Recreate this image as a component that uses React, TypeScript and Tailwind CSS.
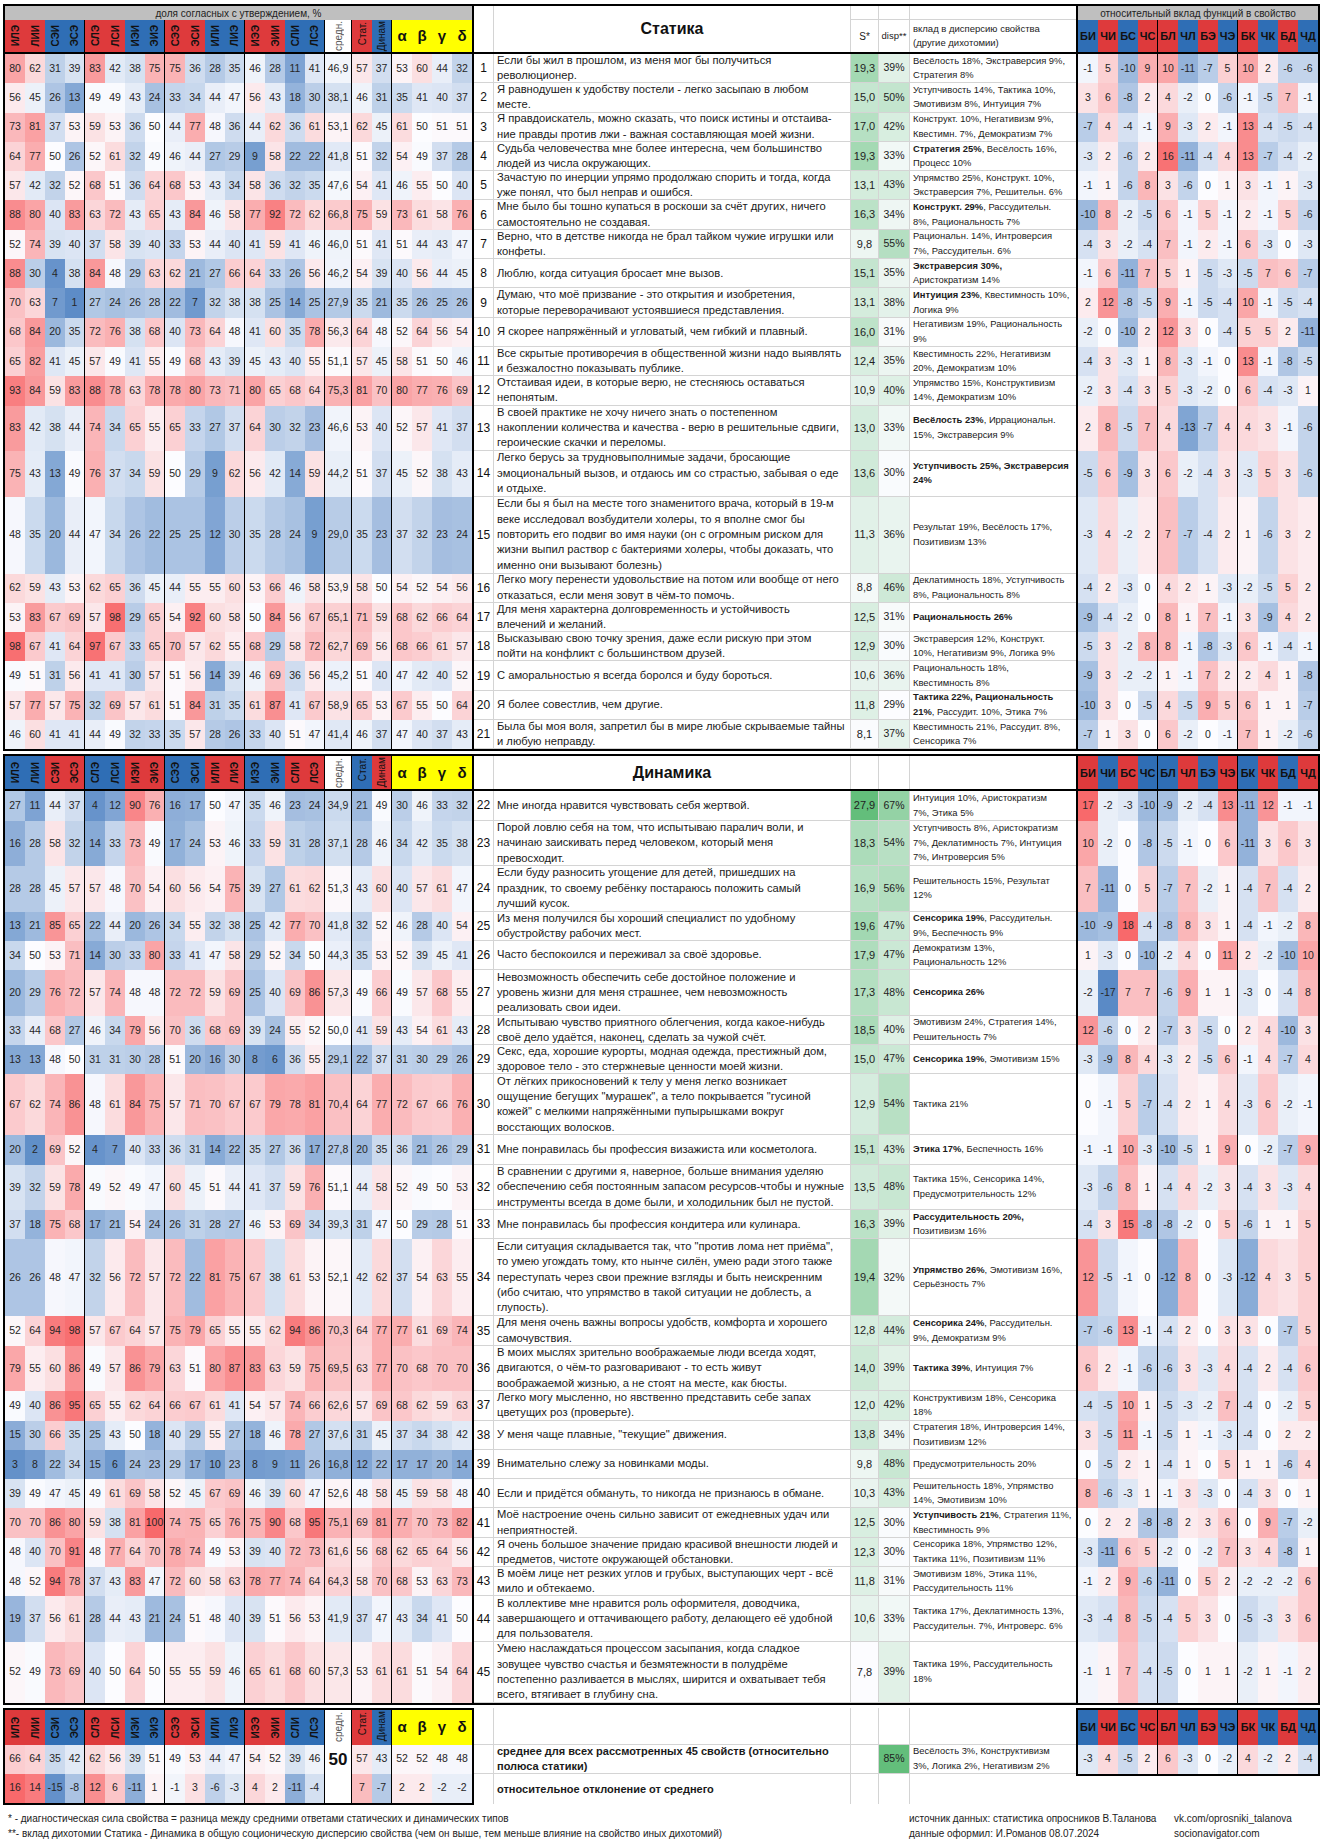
import React from "react";

const RED = "#de3a3c";
const BLUE = "#2f6eb5";

const TYPES = ["ИЛЭ", "ЛИИ", "СЭИ", "ЭСЭ", "СЛЭ", "ЛСИ", "ИЭИ", "ЭИЭ", "СЭЭ", "ЭСИ", "ИЛИ", "ЛИЭ", "ИЭЭ", "ЭИИ", "СЛИ", "ЛСЭ"];
const FUNCS = ["БИ", "ЧИ", "БС", "ЧС", "БЛ", "ЧЛ", "БЭ", "ЧЭ", "БК", "ЧК", "БД", "ЧД"];
// 1 = static (red in the Статика header)
const T_STAT = [1, 1, 0, 0, 1, 1, 0, 0, 1, 1, 0, 0, 1, 1, 0, 0];
const F_STAT = [0, 1, 0, 1, 1, 0, 1, 0, 1, 0, 1, 0];
const GREEK = ["α", "β", "γ", "δ"];

type Raw = [number, string, string, string, string, string[], string, string, string[], string];

const RAW: Raw[] = [
  [1, "80 62 31 39 83 42 38 75 75 36 28 35 46 28 11 41", "46,9", "57 37", "53 60 44 32", ["Если бы жил в прошлом, из меня мог бы получиться", "революционер."], "19,3", "39%", ["Весёлость 18%, Экстраверсия 9%,", "Стратегия 8%"], "-1 5 -10 9 10 -11 -7 5 10 2 -6 -6"],
  [2, "56 45 26 13 49 49 43 24 33 34 44 47 56 43 18 30", "38,1", "46 31", "35 41 40 37", ["Я равнодушен к удобству постели - легко засыпаю в любом", "месте."], "15,0", "50%", ["Уступчивость 14%, Тактика 10%,", "Эмотивизм 8%, Интуиция 7%"], "3 6 -8 2 4 -2 0 -6 -1 -5 7 -1"],
  [3, "73 81 37 53 59 53 36 50 44 77 48 36 44 62 36 61", "53,1", "62 45", "61 50 51 51", ["Я правдоискатель, можно сказать, что поиск истины и отстаива-", "ние правды против лжи - важная составляющая моей жизни."], "17,0", "42%", ["Конструкт. 10%, Негативизм 9%,", "Квестимн. 7%, Демократизм 7%"], "-7 4 -4 -1 9 -3 2 -1 13 -4 -5 -4"],
  [4, "64 77 50 26 52 61 32 49 46 44 27 29 9 58 22 22", "41,8", "51 32", "54 49 37 28", ["Судьба человечества мне более интересна, чем большинство", "людей из числа окружающих."], "19,3", "33%", ["*Стратегия 25%*, Весёлость 16%,", "Процесс 10%"], "-3 2 -6 2 16 -11 -4 4 13 -7 -4 -2"],
  [5, "57 42 32 52 68 51 36 64 68 53 43 34 58 36 32 35", "47,6", "54 41", "46 55 50 40", ["Зачастую по инерции упрямо продолжаю спорить и тогда, когда", "уже понял, что был неправ и ошибся."], "13,1", "43%", ["Упрямство 25%, Конструкт. 10%,", "Экстраверсия 7%, Решительн. 6%"], "-1 1 -6 8 3 -6 0 1 3 -1 1 -3"],
  [6, "88 80 40 83 63 72 43 65 43 84 46 58 77 92 72 62", "66,8", "75 59", "73 61 58 76", ["Мне было бы тошно купаться в роскоши за счёт других, ничего", "самостоятельно не создавая."], "16,3", "34%", ["*Конструкт. 29%*, Рассудительн.", "8%, Рациональность 7%"], "-10 8 -2 -5 6 -1 5 -1 2 -1 5 -6"],
  [7, "52 74 39 40 37 58 39 40 33 53 44 40 41 59 41 46", "46,0", "51 41", "51 44 43 47", ["Верно, что в детстве никогда не брал тайком чужие игрушки или", "конфеты."], "9,8", "55%", ["Рациональн. 14%, Интроверсия", "7%, Рассудительн. 6%"], "-4 3 -2 -4 7 -1 2 -1 6 -3 0 -3"],
  [8, "88 30 4 38 84 48 29 63 62 21 27 66 64 33 26 56", "46,2", "54 39", "40 56 44 45", ["Люблю, когда ситуация бросает мне вызов."], "15,1", "35%", ["*Экстраверсия 30%,*", "Аристократизм 14%"], "-1 6 -11 7 5 1 -5 -3 -5 7 6 -7"],
  [9, "70 63 7 1 27 24 26 28 22 7 32 38 38 25 14 25", "27,9", "35 21", "35 26 25 26", ["Думаю, что моё призвание - это открытия и изобретения,", "которые переворачивают устоявшиеся представления."], "13,1", "38%", ["*Интуиция 23%*, Квестимность 10%,", "Логика 9%"], "2 12 -8 -5 9 -1 -5 -4 10 -1 -5 -4"],
  [10, "68 84 20 35 72 76 38 68 40 73 64 48 41 60 35 78", "56,3", "64 48", "52 64 56 54", ["Я скорее напряжённый и угловатый, чем гибкий и плавный."], "16,0", "31%", ["Негативизм 19%, Рациональность", "9%"], "-2 0 -10 2 12 3 0 -4 5 5 2 -11"],
  [11, "65 82 41 45 57 49 41 55 49 68 43 39 45 43 40 55", "51,1", "57 45", "58 51 50 46", ["Все скрытые противоречия в общественной жизни надо выявлять", "и безжалостно показывать публике."], "12,4", "35%", ["Квестимность 22%, Негативизм", "20%, Демократизм 10%"], "-4 3 -3 1 8 -3 -1 0 13 -1 -8 -5"],
  [12, "93 84 59 83 88 78 63 78 78 80 73 71 80 65 68 64", "75,3", "81 70", "80 77 76 69", ["Отстаивая идеи, в которые верю, не стесняюсь оставаться", "непонятым."], "10,9", "40%", ["Упрямство 15%, Конструктивизм", "14%, Демократизм 10%"], "-2 3 -4 3 5 -3 -2 0 6 -4 -3 1"],
  [13, "83 42 38 44 74 34 65 55 65 33 27 37 64 30 32 23", "46,6", "53 40", "52 57 41 37", ["В своей практике не хочу ничего знать о постепенном", "накоплении количества и качества - верю в решительные сдвиги,", "героические скачки и переломы."], "13,0", "33%", ["*Весёлость 23%*, Иррациональн.", "15%, Экстраверсия 9%"], "2 8 -5 7 4 -13 -7 4 4 3 -1 -6"],
  [14, "75 43 13 49 76 37 34 59 50 29 9 62 56 42 14 59", "44,2", "51 37", "45 52 38 43", ["Легко берусь за трудновыполнимые задачи, бросающие", "эмоциональный вызов, и отдаюсь им со страстью, забывая о еде", "и отдыхе."], "13,6", "30%", ["*Уступчивость 25%, Экстраверсия*", "*24%*"], "-5 6 -9 3 6 -2 -4 3 -3 5 3 -6"],
  [15, "48 35 20 44 47 34 26 22 25 25 12 30 35 28 24 9", "29,0", "35 23", "37 32 23 24", ["Если бы я был на месте того знаменитого врача, который в 19-м", "веке исследовал возбудители холеры, то я вполне смог бы", "повторить его подвиг во имя науки (он с огромным риском для", "жизни выпил раствор с бактериями холеры, чтобы доказать, что", "именно они вызывают болезнь)"], "11,3", "36%", ["Результат 19%, Весёлость 17%,", "Позитивизм 13%"], "-3 4 -2 2 7 -7 -4 2 1 -6 3 2"],
  [16, "62 59 43 53 62 65 36 45 44 55 55 60 53 66 46 58", "53,9", "58 50", "54 52 54 56", ["Легко могу перенести удовольствие на потом или вообще от него", "отказаться, если меня зовут в чём-то помочь."], "8,8", "46%", ["Деклатимность 18%, Уступчивость", "8%, Рациональность 8%"], "-4 2 -3 0 4 2 1 -3 -2 -5 5 2"],
  [17, "53 83 67 69 57 98 29 65 54 92 60 58 50 84 56 67", "65,1", "71 59", "68 62 66 64", ["Для меня характерна долговременность и устойчивость", "влечений и желаний."], "12,5", "31%", ["*Рациональность 26%*"], "-9 -4 -2 0 8 1 7 -1 3 -9 4 2"],
  [18, "98 67 41 64 97 67 33 65 70 57 62 55 68 29 58 72", "62,7", "69 56", "68 66 61 57", ["Высказываю свою точку зрения, даже если рискую при этом", "пойти на конфликт с большинством друзей."], "12,9", "30%", ["Экстраверсия 12%, Конструкт.", "10%, Негативизм 9%, Логика 9%"], "-5 3 -2 8 8 -1 -8 -3 6 -1 -4 -1"],
  [19, "49 51 31 56 41 41 30 57 51 56 14 39 46 69 36 56", "45,2", "51 40", "47 42 40 52", ["С аморальностью я всегда боролся и буду бороться."], "10,6", "36%", ["Рациональность 18%,", "Квестимность 8%"], "-9 3 -2 -2 1 -1 7 2 2 4 1 -8"],
  [20, "57 77 57 75 32 69 57 61 51 84 31 35 61 87 41 67", "58,9", "65 53", "67 55 50 64", ["Я более совестлив, чем другие."], "11,8", "29%", ["*Тактика 22%, Рациональность*", "*21%*,  Рассудит. 10%, Этика 7%"], "-10 3 0 -5 4 -5 9 5 6 1 1 -7"],
  [21, "46 60 41 41 44 49 32 33 35 57 28 26 33 40 51 47", "41,4", "46 37", "47 40 37 43", ["Была бы моя воля, запретил бы в мире любые скрываемые тайны", "и любую неправду."], "8,1", "37%", ["Квестимность 21%, Рассудит. 8%,", "Сенсорика 7%"], "-7 1 3 0 6 -2 0 -1 7 1 -2 -6"],
  [22, "27 11 44 37 4 12 90 76 16 17 50 47 35 46 23 24", "34,9", "21 49", "30 46 33 32", ["Мне иногда нравится чувствовать себя жертвой."], "27,9", "67%", ["Интуиция 10%, Аристократизм", "7%,  Этика 5%"], "17 -2 -3 -10 -9 -2 -4 13 -11 12 -1 -1"],
  [23, "16 28 58 32 14 33 73 49 17 24 53 46 33 59 31 28", "37,1", "28 46", "34 42 35 38", ["Порой ловлю себя на том, что испытываю паралич воли, и", "начинаю заискивать перед человеком, который меня", "превосходит."], "18,3", "54%", ["Уступчивость 8%, Аристократизм", "7%, Деклатимность 7%, Интуиция", "7%, Интроверсия 5%"], "10 -2 0 -8 -5 -1 0 6 -11 3 6 3"],
  [24, "28 28 45 57 57 48 70 54 60 56 54 75 39 27 61 62", "51,3", "43 60", "40 57 61 47", ["Если буду разносить угощение для детей, пришедших на", "праздник, то своему ребёнку постараюсь положить самый", "лучший кусок."], "16,9", "56%", ["Решительность 15%, Результат", "12%"], "7 -11 0 5 -7 7 -2 1 -4 7 -4 2"],
  [25, "13 21 85 65 22 44 20 26 34 55 32 38 25 42 77 70", "41,8", "32 52", "46 28 40 54", ["Из меня получился бы хороший специалист по удобному", "обустройству рабочих мест."], "19,6", "47%", ["*Сенсорика 19%*, Рассудительн.", "9%, Беспечность 9%"], "-10 -9 18 -4 -8 8 3 1 -4 -1 -2 8"],
  [26, "34 50 53 71 14 30 33 80 33 41 47 58 29 52 34 50", "44,3", "35 53", "52 39 45 41", ["Часто беспокоился и переживал за своё здоровье."], "17,9", "47%", ["Демократизм 13%,", "Рациональность 12%"], "1 -3 0 -10 -2 4 0 11 2 -2 -10 10"],
  [27, "20 29 76 72 57 74 48 48 72 72 59 69 25 40 69 86", "57,3", "49 66", "49 57 68 55", ["Невозможность обеспечить себе достойное положение и", "уровень жизни для меня страшнее, чем невозможность", "реализовать свои идеи."], "17,3", "48%", ["*Сенсорика 26%*"], "-2 -17 7 7 -6 9 1 1 -3 0 -4 8"],
  [28, "33 44 68 27 46 34 79 56 70 36 68 69 39 24 55 52", "50,0", "41 59", "43 54 61 43", ["Испытываю чувство приятного облегчения, когда какое-нибудь", "своё дело удаётся, наконец, сделать за чужой счёт."], "18,5", "40%", ["Эмотивизм 24%, Стратегия 14%,", "Решительность 7%"], "12 -6 0 2 -7 3 -5 0 2 4 -10 3"],
  [29, "13 13 48 50 31 31 30 28 51 20 16 30 8 6 36 55", "29,1", "22 37", "31 30 29 26", ["Секс, еда, хорошие курорты, модная одежда, престижный дом,", "здоровое тело - это стержневые ценности моей жизни."], "15,0", "47%", ["*Сенсорика 19%*, Эмотивизм 15%"], "-3 -9 8 4 -3 2 -5 6 -1 4 -7 4"],
  [30, "67 62 74 86 48 61 84 75 57 71 70 67 67 79 78 81", "70,4", "64 77", "72 67 66 76", ["От лёгких прикосновений к телу у меня легко возникает", "ощущение бегущих \"мурашек\", а тело покрывается \"гусиной", "кожей\" с мелкими напряжёнными пупырышками вокруг", "восстающих волосков."], "12,9", "54%", ["Тактика 21%"], "0 -1 5 -7 -4 2 1 4 -3 6 -2 -1"],
  [31, "20 2 69 52 4 7 40 33 36 31 14 22 35 27 36 17", "27,8", "20 35", "36 21 26 29", ["Мне понравилась бы профессия визажиста или косметолога."], "15,1", "43%", ["*Этика 17%*, Беспечность 16%"], "-1 -1 10 -3 -10 -5 1 9 0 -2 -7 9"],
  [32, "39 32 59 78 49 52 49 47 60 45 51 44 41 37 59 76", "51,1", "44 58", "52 49 50 53", ["В сравнении с другими я, наверное, больше внимания уделяю", "обеспечению себя постоянным запасом ресурсов-чтобы и нужные", "инструменты всегда в доме были, и холодильник был не пустой."], "13,5", "48%", ["Тактика 15%, Сенсорика 14%,", "Предусмотрительность 12%"], "-3 -6 8 1 -4 4 -2 3 -4 3 -3 4"],
  [33, "37 18 75 68 17 21 54 24 26 31 28 27 46 53 69 34", "39,3", "31 47", "50 29 28 51", ["Мне понравилась бы профессия кондитера или кулинара."], "16,3", "39%", ["*Рассудительность 20%,*", "Позитивизм 16%"], "-4 3 15 -8 -8 -2 0 5 -6 1 1 5"],
  [34, "26 26 48 47 32 56 72 57 72 22 81 75 67 38 61 53", "52,1", "42 62", "37 54 63 55", ["Если ситуация складывается так, что \"против лома нет приёма\",", "то умею угождать тому, кто нынче силён, умею ради этого также", "переступать через свои прежние взгляды и быть неискренним", "(ибо считаю, что упрямство в такой ситуации не доблесть, а", "глупость)."], "19,4", "32%", ["*Упрямство 26%*, Эмотивизм 16%,", "Серьёзность 7%"], "12 -5 -1 0 -12 8 0 -3 -12 4 3 5"],
  [35, "52 64 94 98 57 67 64 57 75 79 65 55 55 62 94 86", "70,3", "64 77", "77 61 69 74", ["Для меня очень важны вопросы удобств, комфорта и хорошего", "самочувствия."], "12,8", "44%", ["*Сенсорика 24%*, Рассудительн.", "9%, Демократизм 9%"], "-7 -6 13 -1 -4 2 0 3 3 0 -7 5"],
  [36, "79 55 60 86 49 57 86 79 63 51 80 87 83 63 59 75", "69,5", "63 77", "70 68 70 70", ["В моих мыслях зрительно воображаемые люди всегда ходят,", "двигаются, о чём-то разговаривают - то есть живут", "воображаемой жизнью, а не стоят на месте, как бюсты."], "14,0", "39%", ["*Тактика 39%*, Интуиция 7%"], "6 2 -1 -6 -6 3 -3 4 -4 2 -4 6"],
  [37, "49 40 86 95 65 55 62 64 66 67 61 41 54 57 74 66", "62,6", "57 69", "68 62 59 63", ["Легко могу мысленно, но явственно представить себе запах", "цветущих роз (проверьте)."], "12,0", "42%", ["Конструктивизм 18%, Сенсорика", "18%"], "-4 -5 10 1 -5 -3 -2 7 -4 0 -2 5"],
  [38, "15 30 66 35 25 43 50 18 40 29 55 27 18 46 78 27", "37,6", "31 45", "37 34 38 42", ["У меня чаще плавные, \"текущие\" движения."], "13,8", "34%", ["Стратегия 18%, Интроверсия 14%,", "Позитивизм 12%"], "3 -5 11 -1 -5 1 -1 -3 -4 0 2 2"],
  [39, "3 8 22 34 15 6 24 23 29 17 10 23 8 9 11 26", "16,8", "12 22", "17 17 20 14", ["Внимательно слежу за новинками моды."], "9,8", "48%", ["Предусмотрительность 20%"], "0 -5 2 1 -4 1 0 5 1 1 -6 4"],
  [40, "39 49 47 45 49 61 69 58 52 45 67 69 46 39 60 47", "52,6", "48 58", "45 59 58 48", ["Если и придётся обмануть, то никогда не признаюсь в обмане."], "10,3", "43%", ["Решительность 18%, Упрямство", "14%, Эмотивизм 10%"], "8 -6 -3 1 -1 3 -3 0 -4 3 0 1"],
  [41, "70 70 86 80 59 38 81 100 74 75 65 76 75 90 68 95", "75,1", "69 81", "77 70 73 82", ["Моё настроение очень сильно зависит от ежедневных удач или", "неприятностей."], "12,5", "30%", ["*Уступчивость 21%*, Стратегия 11%,", "Квестимность 9%"], "0 2 2 -8 -8 2 3 6 0 9 -7 -2"],
  [42, "48 40 70 91 48 77 64 70 78 74 49 53 39 40 72 73", "61,6", "56 68", "62 65 64 56", ["Я очень большое значение придаю красивой внешности людей и", "предметов, чистоте окружающей обстановки."], "12,3", "30%", ["Сенсорика 18%, Упрямство 12%,", "Тактика 11%, Позитивизм 11%"], "-3 -11 6 5 -2 0 -2 7 3 4 -8 1"],
  [43, "48 52 94 78 37 43 83 47 72 60 58 63 78 77 74 64", "64,3", "58 70", "68 53 63 73", ["В моём лице нет резких углов и грубых, выступающих черт - всё", "мило и обтекаемо."], "11,8", "31%", ["Эмотивизм 18%, Этика 11%,", "Рассудительность 11%"], "-1 2 9 -6 -11 0 5 2 -2 -2 -2 6"],
  [44, "19 37 56 61 28 44 43 21 24 51 48 40 39 51 56 53", "41,9", "37 47", "43 34 41 50", ["В коллективе мне нравится роль оформителя, доводчика,", "завершающего и оттачивающего работу, делающего её удобной", "для пользователя."], "10,6", "33%", ["Тактика 17%, Деклатимность 13%,", "Рассудительн. 7%, Интроверс. 6%"], "-3 -4 8 -5 -4 5 3 0 -5 -3 3 6"],
  [45, "52 49 73 69 40 50 64 50 55 55 59 46 65 61 68 60", "57,3", "53 61", "61 51 54 64", ["Умею наслаждаться процессом засыпания, когда сладкое", "зовущее чувство счастья и безмятежности в полудрёме", "постепенно разливается в мыслях, ширится и охватывает тебя", "всего, втягивает в глубину сна."], "7,8", "39%", ["Тактика 19%, Рассудительность", "18%"], "-1 1 7 -4 -5 0 1 1 -2 1 -1 2"],
];

const nums = (s: string) => s.trim().split(/\s+/).map(Number);
const dec = (s: string) => parseFloat(s.replace(",", "."));

const W = [252, 252, 255];
const B = [90, 138, 198];
const R = [248, 105, 107];
const G = [99, 190, 123];
const mix = (c: number[], t: number) => {
  const k = Math.max(0, Math.min(1, t));
  return `rgb(${c.map((x, i) => Math.round(W[i] + (x - W[i]) * k)).join(",")})`;
};
const diverge = (v: number, span: number, mid = 0) => (v < mid ? mix(B, (mid - v) / span) : mix(R, (v - mid) / span));
const pct = (v: number) => diverge(v, 50, 50);
const fn = (v: number) => diverge(v, 17);
const dev = (v: number) => diverge(v, 16);
const green = (v: number, lo: number, hi: number) => mix(G, (v - lo) / (hi - lo));

const H: Record<number, string> = { 1: "h-[29.3px]", 2: "h-[29.3px]", 3: "h-[45.5px]", 4: "h-[61px]", 5: "h-[77px]" };

const cell = "flex items-center justify-center text-[10.5px] text-[#262626]";
const typeW = (i: number) => (i % 4 === 3 ? "w-[20px] border-r border-black" : "w-[20px]");
const qW = (i: number) => (i === 3 ? "w-[22px] border-r-2 border-black" : "w-[20px]");
const fW = (i: number) =>
  i === 0 ? "w-[22px] border-l-2 border-black" : i === 3 || i === 7 ? "w-[20px] border-r border-black" : "w-[20px]";
const fHeadW = (i: number) => (i === 3 || i === 7 ? "w-[20px] border-r border-black" : "w-[20px]");

function Rich({ line }: { line: string }) {
  return (
    <div>
      {line.split("*").map((seg, i) => (i % 2 ? <b key={i}>{seg}</b> : <span key={i}>{seg}</span>))}
    </div>
  );
}

function Vert({ label, className = "" }: { label: string; className?: string }) {
  return <span className={`[writing-mode:vertical-rl] rotate-180 whitespace-nowrap ${className}`}>{label}</span>;
}

function TypeHeads({ statics }: { statics: boolean }) {
  return (
    <div className="flex flex-1 overflow-hidden">
      {TYPES.map((t, i) => (
        <div
          key={t}
          className={`${typeW(i)} flex items-center justify-center`}
          style={{ backgroundColor: (T_STAT[i] === 1) === statics ? RED : BLUE }}
        >
          <Vert label={t} className="text-[10px] font-bold text-[#111]" />
        </div>
      ))}
      <div className="flex w-[27px] items-center justify-center border-r border-black bg-white">
        <Vert label="средн." className="text-[10px] text-[#555]" />
      </div>
      <div className="flex w-[20px] items-start justify-center overflow-hidden pt-[2px]" style={{ backgroundColor: statics ? RED : BLUE }}>
        <Vert label="Стат." className="text-[10px] text-[#111]" />
      </div>
      <div
        className="flex w-[20px] items-start justify-center overflow-hidden border-r border-black pt-[1px]"
        style={{ backgroundColor: statics ? BLUE : RED }}
      >
        <Vert label="Динам" className="text-[10px] text-[#111]" />
      </div>
      {GREEK.map((g) => (
        <div key={g} className="flex w-[20px] items-center justify-center bg-[#ffff00] text-[15px] font-bold text-[#111]">
          {g}
        </div>
      ))}
    </div>
  );
}

function FuncHeads({ statics }: { statics: boolean }) {
  return (
    <div className="flex flex-1">
      {FUNCS.map((f, i) => (
        <div
          key={f}
          className={`${fHeadW(i)} flex items-center justify-center text-[11px] font-bold text-[#111]`}
          style={{ backgroundColor: (F_STAT[i] === 1) === statics ? RED : BLUE }}
        >
          {f}
        </div>
      ))}
    </div>
  );
}

function StaticHeader() {
  return (
    <div className="flex h-[48px] border-b-2 border-black">
      <div className="flex w-[469px] flex-col border-r-2 border-black">
        <div className="flex h-[14px] items-center justify-center bg-[#bfbfbf] text-[10px] text-[#222]">
          доля согласных с утверждением, %
        </div>
        <TypeHeads statics />
      </div>
      <div className="w-[19px]" />
      <div className="flex w-[357px] items-center justify-center border-l border-[#d4d4d4] text-[16px] font-bold text-[#111]">
        Статика
      </div>
      <div className="flex w-[28px] flex-col border-l border-[#d4d4d4]">
        <div className="h-[14px] border-b border-[#d4d4d4]" />
        <div className="flex flex-1 items-center justify-center text-[10px] text-[#222]">S*</div>
      </div>
      <div className="flex w-[31px] flex-col border-l border-[#d4d4d4]">
        <div className="h-[14px] border-b border-[#d4d4d4]" />
        <div className="flex flex-1 items-center justify-center whitespace-nowrap text-[9.5px] text-[#222]">disp**</div>
      </div>
      <div className="flex w-[167px] flex-col border-l border-[#d4d4d4]">
        <div className="h-[14px] border-b border-[#d4d4d4]" />
        <div className="flex flex-1 flex-col justify-center pl-[3px] text-[9.5px] leading-[14px] text-[#222]">
          <div>вклад в дисперсию свойства</div>
          <div>(другие дихотомии)</div>
        </div>
      </div>
      <div className="flex w-[242px] flex-col border-l-2 border-black">
        <div className="flex h-[14px] items-center justify-center bg-[#bfbfbf] text-[10px] text-[#222]">
          относительный вклад функций в свойство
        </div>
        <FuncHeads statics />
      </div>
    </div>
  );
}

function DynamicHeader() {
  return (
    <div className="flex h-[35px] border-b-2 border-black">
      <div className="flex w-[469px] flex-col border-r-2 border-black">
        <TypeHeads statics={false} />
      </div>
      <div className="w-[19px]" />
      <div className="flex w-[357px] items-center justify-center border-l border-[#d4d4d4] text-[16px] font-bold text-[#111]">
        Динамика
      </div>
      <div className="w-[28px] border-l border-[#d4d4d4]" />
      <div className="w-[31px] border-l border-[#d4d4d4]" />
      <div className="w-[167px] border-l border-[#d4d4d4]" />
      <div className="flex w-[242px] flex-col border-l-2 border-black">
        <FuncHeads statics={false} />
      </div>
    </div>
  );
}

function DataRow({ r }: { r: Raw }) {
  const [n, types, avg, sd, q, text, s, d, vk, f] = r;
  const st = nums(sd);
  return (
    <div className={`flex ${H[text.length]}`}>
      {nums(types).map((v, i) => (
        <div key={i} className={`${typeW(i)} ${cell}`} style={{ backgroundColor: pct(v) }}>
          {v}
        </div>
      ))}
      <div className={`w-[27px] border-r border-black ${cell}`} style={{ backgroundColor: pct(dec(avg)) }}>
        {avg}
      </div>
      <div className={`w-[20px] ${cell}`} style={{ backgroundColor: pct(st[0]) }}>
        {st[0]}
      </div>
      <div className={`w-[20px] border-r border-black ${cell}`} style={{ backgroundColor: pct(st[1]) }}>
        {st[1]}
      </div>
      {nums(q).map((v, i) => (
        <div key={i} className={`${qW(i)} ${cell}`} style={{ backgroundColor: pct(v) }}>
          {v}
        </div>
      ))}
      <div className="flex w-[19px] items-center justify-center border-b border-[#d4d4d4] text-[12px] text-[#111]">{n}</div>
      <div className="flex w-[357px] flex-col justify-center overflow-hidden whitespace-nowrap border-b border-l border-[#d4d4d4] pl-[3px] text-[11.2px] leading-[15.3px] text-[#1a1a1a]">
        {text.map((l, i) => (
          <div key={i}>{l}</div>
        ))}
      </div>
      <div
        className="flex w-[28px] items-center justify-center border-b border-l border-[#d4d4d4] text-[11px] text-[#222]"
        style={{ backgroundColor: green(dec(s), 7.8, 27.9) }}
      >
        {s}
      </div>
      <div
        className="flex w-[31px] items-center justify-center border-b border-l border-[#d4d4d4] text-[10.5px] text-[#222]"
        style={{ backgroundColor: green(parseInt(d), 29, 85) }}
      >
        {d}
      </div>
      <div className="flex w-[167px] flex-col justify-center overflow-hidden whitespace-nowrap border-b border-l border-[#d4d4d4] pl-[3px] text-[9.4px] leading-[14.5px] text-[#1a1a1a]">
        {vk.map((l, i) => (
          <Rich key={i} line={l} />
        ))}
      </div>
      {nums(f).map((v, i) => (
        <div key={i} className={`${fW(i)} ${cell}`} style={{ backgroundColor: fn(v) }}>
          {v}
        </div>
      ))}
    </div>
  );
}

const SUM_T = "66 64 35 42 62 56 39 51 49 53 44 47 54 52 39 46";
const DEV_T = "16 14 -15 -8 12 6 -11 1 -1 3 -6 -3 4 2 -11 -4";
const SUM_F = "-3 4 -5 2 6 -3 0 -2 4 -2 2 -4";

function Summary() {
  const sumT = nums(SUM_T);
  const devT = nums(DEV_T);
  return (
    <div className="mt-[3px] flex">
      <div className="flex w-[471px] flex-col border-2 border-black">
        <div className="flex h-[35px]">
          <div className="flex w-[467px] flex-col">
            <TypeHeads statics />
          </div>
        </div>
        <div className="flex h-[29px]">
          {sumT.map((v, i) => (
            <div key={i} className={`${typeW(i)} ${cell}`} style={{ backgroundColor: pct(v) }}>
              {v}
            </div>
          ))}
          <div className="flex w-[27px] items-center justify-center border-r border-black bg-white text-[17px] font-bold text-[#111]">
            50
          </div>
          <div className={`w-[20px] ${cell}`} style={{ backgroundColor: pct(57) }}>
            57
          </div>
          <div className={`w-[20px] border-r border-black ${cell}`} style={{ backgroundColor: pct(43) }}>
            43
          </div>
          {[52, 52, 48, 48].map((v, i) => (
            <div key={i} className={`w-[20px] ${cell}`} style={{ backgroundColor: pct(v) }}>
              {v}
            </div>
          ))}
        </div>
        <div className="flex h-[29px]">
          {devT.map((v, i) => (
            <div key={i} className={`${typeW(i)} ${cell}`} style={{ backgroundColor: dev(v) }}>
              {v}
            </div>
          ))}
          <div className="w-[27px] border-r border-black bg-white" />
          <div className={`w-[20px] ${cell}`} style={{ backgroundColor: dev(7) }}>
            7
          </div>
          <div className={`w-[20px] border-r border-black ${cell}`} style={{ backgroundColor: dev(-7) }}>
            -7
          </div>
          {[2, 2, -2, -2].map((v, i) => (
            <div key={i} className={`w-[20px] ${cell}`} style={{ backgroundColor: dev(v) }}>
              {v}
            </div>
          ))}
        </div>
      </div>

      <div className="flex w-[602px] flex-col">
        <div className="flex h-[37px] border-b border-[#d4d4d4]">
          <div className="w-[19px]" />
          <div className="w-[357px] border-l border-[#d4d4d4]" />
          <div className="w-[28px] border-l border-[#d4d4d4]" />
          <div className="w-[31px] border-l border-[#d4d4d4]" />
          <div className="w-[167px] border-l border-[#d4d4d4]" />
        </div>
        <div className="flex h-[29px] border-b border-[#d4d4d4]">
          <div className="w-[19px]" />
          <div className="flex w-[357px] flex-col justify-center whitespace-nowrap border-l border-[#d4d4d4] pl-[3px] text-[11px] font-bold leading-[14.5px] text-[#1a1a1a]">
            <div>среднее для всех рассмотренных 45 свойств (относительно</div>
            <div>полюса статики)</div>
          </div>
          <div className="w-[28px] border-l border-[#d4d4d4]" />
          <div className="flex w-[31px] items-center justify-center border-l border-[#d4d4d4] bg-[#63be7b] text-[10.5px] text-[#222]">
            85%
          </div>
          <div className="flex w-[167px] flex-col justify-center whitespace-nowrap border-l border-[#d4d4d4] pl-[3px] text-[9.4px] leading-[14.5px] text-[#1a1a1a]">
            <div>Весёлость 3%, Конструктивизм</div>
            <div>3%, Логика 2%, Негативизм 2%</div>
          </div>
        </div>
        <div className="flex h-[30px]">
          <div className="w-[19px]" />
          <div className="flex w-[357px] items-center border-l border-[#d4d4d4] pl-[3px] text-[11px] font-bold text-[#1a1a1a]">
            относительное отклонение от среднего
          </div>
          <div className="w-[28px] border-l border-[#d4d4d4]" />
          <div className="w-[31px] border-l border-[#d4d4d4]" />
          <div className="w-[167px] border-l border-[#d4d4d4]" />
        </div>
      </div>

      <div className="flex h-[68px] w-[244px] flex-col border-2 border-black">
        <div className="flex h-[35px]">
          <FuncHeads statics />
        </div>
        <div className="flex h-[29px]">
          {nums(SUM_F).map((v, i) => (
            <div key={i} className={`${fHeadW(i)} ${cell}`} style={{ backgroundColor: fn(v) }}>
              {v}
            </div>
          ))}
        </div>
      </div>
    </div>
  );
}

export default function App() {
  const statics = RAW.slice(0, 21);
  const dynamics = RAW.slice(21);
  return (
    <div className="w-[1321px] min-h-[1847px] overflow-hidden bg-white pl-[3px] pt-[4px] font-['Liberation_Sans',Arial,sans-serif]">
      <div className="w-[1317px] border-2 border-black">
        <StaticHeader />
        {statics.map((r) => (
          <DataRow key={r[0]} r={r} />
        ))}
      </div>
      <div className="mt-[3px] w-[1317px] border-2 border-black">
        <DynamicHeader />
        {dynamics.map((r) => (
          <DataRow key={r[0]} r={r} />
        ))}
      </div>
      <Summary />
      <div className="mt-[6px] flex text-[10px] leading-[15px] text-[#222]">
        <div className="w-[906px] pl-[5px]">
          <div>* - диагностическая сила свойства = разница между средними ответами статических и динамических типов</div>
          <div>**- вклад дихотомии Статика - Динамика в общую соционическую дисперсию свойства (чем он выше, тем меньше влияние на свойство иных дихотомий)</div>
        </div>
        <div className="w-[265px]">
          <div>источник данных: статистика опросников В.Таланова</div>
          <div>данные оформил: И.Романов 08.07.2024</div>
        </div>
        <div>
          <div>vk.com/oprosniki_talanova</div>
          <div>socionavigator.com</div>
        </div>
      </div>
    </div>
  );
}
